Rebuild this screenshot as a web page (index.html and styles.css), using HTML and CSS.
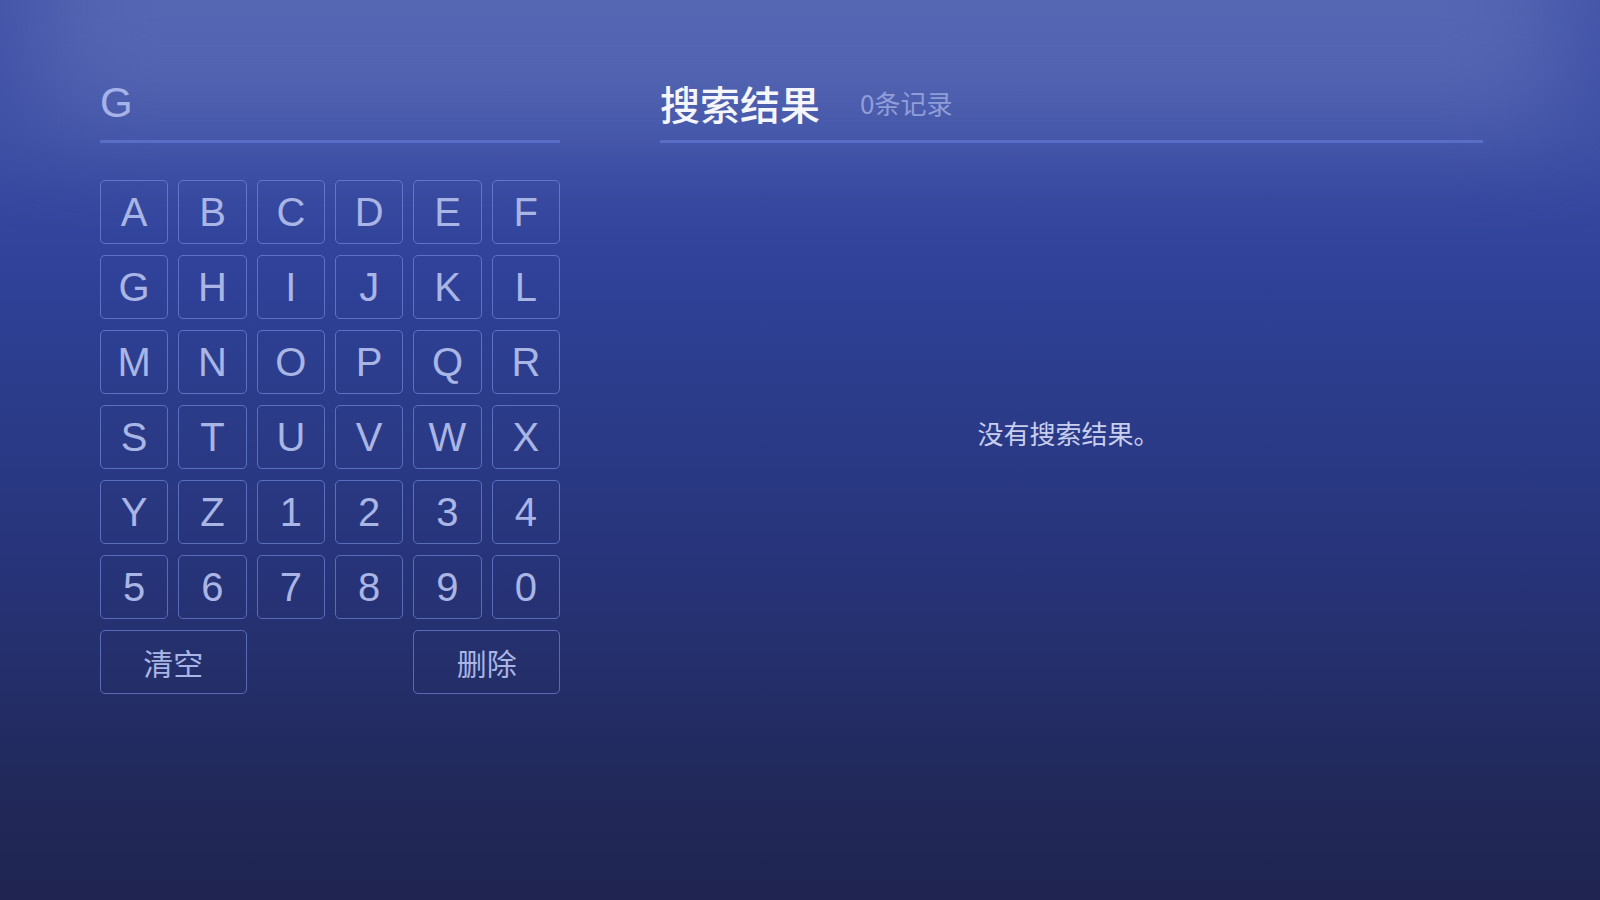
FILE: index.html
```html
<!DOCTYPE html>
<html lang="zh-CN">
<head>
<meta charset="utf-8">
<title>搜索</title>
<link rel="stylesheet" href="styles.css">
</head>
<body>
<div class="screen">
  <div class="page">
    <section class="left">
      <div class="header input-row"><span class="input-text">G</span></div>
      <div class="keyboard">
        <div class="key">A</div><div class="key">B</div><div class="key">C</div><div class="key">D</div><div class="key">E</div><div class="key">F</div>
        <div class="key">G</div><div class="key">H</div><div class="key">I</div><div class="key">J</div><div class="key">K</div><div class="key">L</div>
        <div class="key">M</div><div class="key">N</div><div class="key">O</div><div class="key">P</div><div class="key">Q</div><div class="key">R</div>
        <div class="key">S</div><div class="key">T</div><div class="key">U</div><div class="key">V</div><div class="key">W</div><div class="key">X</div>
        <div class="key">Y</div><div class="key">Z</div><div class="key">1</div><div class="key">2</div><div class="key">3</div><div class="key">4</div>
        <div class="key">5</div><div class="key">6</div><div class="key">7</div><div class="key">8</div><div class="key">9</div><div class="key">0</div>
        <div class="key key-wide key-clear">清空</div>
        <div class="key key-wide key-delete">删除</div>
      </div>
    </section>
    <section class="right">
      <div class="header result-head">
        <h1 class="title">搜索结果</h1>
        <span class="count">0条记录</span>
      </div>
      <div class="empty">没有搜索结果。</div>
    </section>
  </div>
</div>
</body>
</html>
```
FILE: styles.css
```css
html, body {
  margin: 0;
  padding: 0;
}
body {
  width: 1600px;
  height: 900px;
  overflow: hidden;
  font-family: "Liberation Sans", "Noto Sans CJK SC", sans-serif;
}
.screen {
  position: relative;
  width: 1600px;
  height: 900px;
  overflow: hidden;
  background: linear-gradient(180deg,
    #4253a8 0px,
    #3d4fa4 140px,
    #36489f 200px,
    #30429a 260px,
    #2d3f92 330px,
    #2a3a86 440px,
    #27347a 560px,
    #242e69 680px,
    #21295a 790px,
    #1f2450 900px);
}
.screen::before {
  content: "";
  position: absolute;
  left: 40px;
  right: 40px;
  top: -100px;
  height: 220px;
  background: #5566b3;
  filter: blur(50px);
  pointer-events: none;
}
.page {
  position: relative;
  display: flex;
  gap: 100px;
  padding: 0 117px 0 100px;
}
.left {
  width: 460px;
  flex: none;
}
.right {
  width: 823px;
  flex: none;
}
.header {
  height: 74px;
  padding-top: 66px;
  display: flex;
  align-items: center;
  border-bottom: 3px solid #5b6ec7;
}
.input-text {
  font-family: "Liberation Sans", sans-serif;
  font-size: 42px;
  line-height: 42px;
  color: #a6b3e8;
}
.keyboard {
  margin-top: 37px;
  display: grid;
  grid-template-columns: repeat(6, 1fr);
  grid-auto-rows: 64px;
  column-gap: 10px;
  row-gap: 11px;
}
.key {
  box-sizing: border-box;
  border: 1.5px solid rgba(125, 145, 228, 0.6);
  border-radius: 5px;
  display: flex;
  align-items: center;
  justify-content: center;
  font-family: "Liberation Sans", sans-serif;
  font-size: 40px;
  line-height: 40px;
  color: #a9b5e4;
}
.key-wide {
  font-family: "Noto Sans CJK SC", sans-serif;
  font-size: 30px;
}
.key-clear {
  grid-column: 1 / 3;
}
.key-delete {
  grid-column: 5 / 7;
}
.result-head {
  gap: 40px;
}
.title {
  margin: 0;
  font-family: "Noto Sans CJK SC", sans-serif;
  font-size: 40px;
  line-height: 40px;
  font-weight: 500;
  color: #f5f6fc;
}
.count {
  font-family: "Noto Sans CJK SC", sans-serif;
  font-size: 26px;
  line-height: 26px;
  color: #8f9dd9;
}
.empty {
  margin-top: 273px;
  padding-right: 6px;
  text-align: center;
  font-family: "Noto Sans CJK SC", sans-serif;
  font-size: 26px;
  line-height: 34px;
  color: #c8cfee;
}
```
